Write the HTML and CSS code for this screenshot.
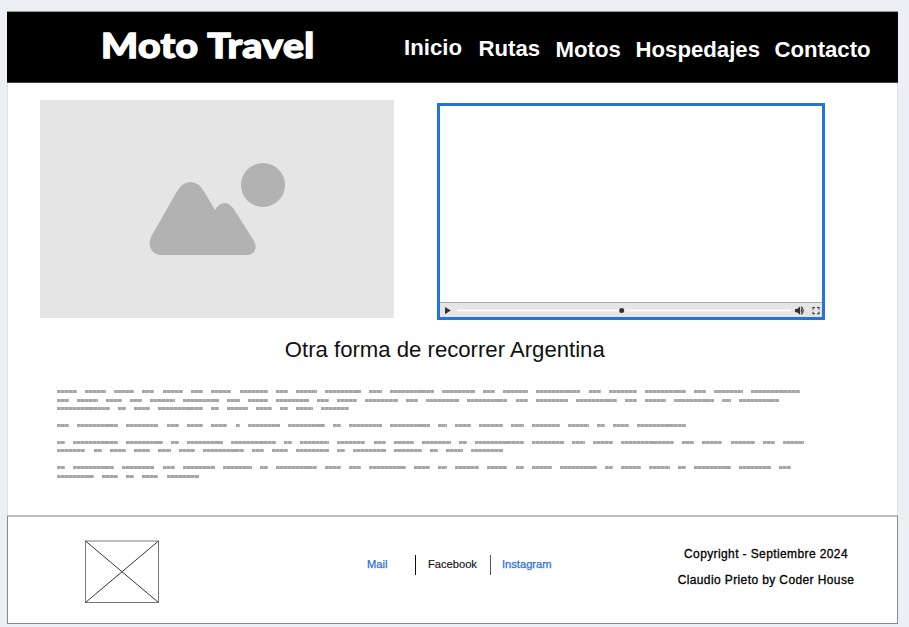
FILE: index.html
```html
<!DOCTYPE html>
<html lang="es">
<head>
<meta charset="utf-8">
<title>Moto Travel</title>
<link rel="stylesheet" href="styles.css">
</head>
<body>
<div class="page">
  <header class="header">
    <h1 class="brand">Moto Travel</h1>
    <nav class="nav">
      <a class="nav-home">Inicio</a>
      <a class="nav-routes">Rutas</a>
      <a>Motos</a>
      <a>Hospedajes</a>
      <a>Contacto</a>
    </nav>
  </header>
  <main class="main">
    <div class="media">
      <svg class="picture" viewBox="40 100 354 218">
        <circle cx="263" cy="185" r="22"/>
        <path d="M151.500 236 L176 193 Q182 182 190.500 182 Q199 182 205 193 L215 210 Q219 203 225 203 Q230 203 235 211 L254 241 Q257 246 254.500 251 Q252 255 247 255 H162 Q154 255 151 249 Q148 243 151.500 236 Z"/>
      </svg>
      <div class="video">
        <div class="screen"></div>
        <svg class="controls" viewBox="440 302 382 15">
          <path class="edge" d="M440 302.500H822"/>
          <path class="track" d="M457 310.500H791"/>
          <circle cx="621.700" cy="310.600" r="2.500"/>
          <path d="M445 307v7.200l5.800-3.600z"/>
          <path d="M795 309h2l3-2.600v8.400l-3-2.600h-2z"/>
          <path class="wave" d="M801 308.800q1.400 1.700 0 3.600M801 306.800q4.600 3.600 0 7.500"/>
          <path class="wave" d="M813 309.500v-2h2M817 307.500h2v2M819 311.700v2h-2M815 313.700h-2v-2"/>
        </svg>
      </div>
    </div>
    <h2 class="title">Otra forma de recorrer Argentina</h2>
    <div class="copy" id="copy"></div>
  </main>
  <footer class="footer">
    <svg class="logo" viewBox="0 0 75 63">
      <path class="frame-top" d="M0 1H74"/>
      <path class="frame" d="M.5 1V62.500H73.500V1"/>
      <path class="cross" d="M.5 1L73.500 62.500M73.500 1L.5 62.500"/>
    </svg>
    <div class="links">
      <a class="link mail">Mail</a>
      <span class="divider"></span>
      <span class="facebook">Facebook</span>
      <span class="divider soft"></span>
      <a class="link insta">Instagram</a>
    </div>
    <div class="credits">
      <p>Copyright - Septiembre 2024</p>
      <p class="author">Claudio Prieto by Coder House</p>
    </div>
  </footer>
</div>
<script src="copy.js"></script>
</body>
</html>
```
FILE: styles.css
```css
* { box-sizing: border-box; }
body {
  margin: 0;
  padding: 11px 11px 0 7px;
  height: 627px;
  overflow: hidden;
  background: #ecf0f5;
  font-family: "Liberation Sans", Arial, sans-serif;
  color: #111;
}
.page { width: 891px; background: #fff; }
.header {
  height: 72px;
  background: #000;
  border-top: 1px solid #999;
  border-bottom: 1px solid #444;
  display: flex;
  color: #fff;
}
.brand {
  width: 303px;
  margin: 0 0 0 94px;
  font: 900 34px/66px Lato, sans-serif;
  letter-spacing: 0.4px;
  white-space: nowrap;
  -webkit-text-stroke: 1.3px #fff;
  transform: scaleX(1.148);
  transform-origin: left center;
}
.nav {
  display: grid;
  grid-template-columns: 74.5px 77px 80px 139px 100px;
  font-size: 22.2px;
  font-weight: 700;
  line-height: 26px;
  padding-top: 25px;
}
.nav-home { margin-top: -2px; }
.nav-routes { margin-top: -1px; }
.main {
  height: 432px;
  border-left: 1px solid #dde2e8;
  border-right: 1px solid #dde2e8;
}
.media { display: flex; padding: 17px 0 0 32px; height: 237px; }
.picture { width: 354px; height: 218px; background: #e5e5e5; fill: #b2b2b2; }
.video {
  width: 388px;
  height: 217px;
  margin: 3px 0 0 43px;
  border: 3px solid #2474dc;
  display: flex;
  flex-direction: column;
}
.screen { flex: 1; }
.controls { width: 382px; height: 15px; background: #e5e5e5; fill: #333; display: block; }
.edge { stroke: #aaa; }
.track { stroke: #fff; stroke-width: 1.5; }
.wave { fill: none; stroke: #333; stroke-width: 1.1; }
.title {
  margin: 16px 0 0 276.8px;
  font-size: 22.15px;
  font-weight: 400;
  line-height: 28px;
  white-space: nowrap;
}
.copy { padding: 26.1px 0 0 49px; }
.row { display: flex; gap: 8.12px; height: 3px; margin-bottom: 5.45px; }
.row.last { margin-bottom: 14px; }
.word {
  background: repeating-linear-gradient(90deg, #a6a6a6 0 3.1px, #bcbcbc 3.1px 4.06px);
}
.footer {
  height: 109px;
  border: 1px solid #858a8d;
  border-top: 2px solid #bebebe;
  display: flex;
}
.logo { width: 75px; height: 63px; margin: 23px 0 0 77px; fill: none; }
.frame-top { stroke: #bbb; stroke-width: 2; }
.frame { stroke: #777; }
.cross { stroke: #333; }
.links {
  display: flex;
  height: 20px;
  margin: 38px 0 0 207px;
  font-size: 11.15px;
  line-height: 19px;
  white-space: nowrap;
}
.link { color: #2a6fdb; -webkit-text-stroke: 0.25px #2a6fdb; }
.mail { width: 48px; }
.divider { width: 1px; background: #111; }
.facebook { width: 74px; padding-left: 12px; -webkit-text-stroke: 0.15px #111; }
.divider.soft { background: #555; }
.insta { width: 62px; padding-left: 11px; }
.credits {
  width: 220px;
  margin: 29px 0 0 103px;
  text-align: center;
  font-size: 12px;
  line-height: 16px;
  letter-spacing: 0.39px;
  color: #000;
  -webkit-text-stroke: 0.3px #000;
}
.credits p { margin: 0 0 10px; }
```
FILE: copy.js
```js
// Word lengths, in characters, for each line of the placeholder copy.
const paragraphs = [
  [
    [5,5,5,3,5,3,5,7,3,5,9,3,11,8,3,6,11,3,7,10,3,7,12],
    [3,5,4,3,6,9,3,5,8,3,5,8,3,8,10,3,8,10,3,5,10,2,10],
    [13,2,4,11,2,5,4,2,4,7]
  ],
  [[3,10,8,3,4,4,1,8,9,2,8,10,2,4,6,3,7,5,2,4,12]],
  [
    [2,11,9,2,9,11,2,7,7,3,5,7,2,12,8,3,5,13,3,5,6,3,5],
    [7,2,4,4,3,4,10,3,4,8,2,8,7,2,4,8]
  ],
  [
    [2,10,8,3,8,7,2,10,4,3,9,4,2,6,5,2,5,9,2,5,5,2,9,8,3],
    [9,4,2,4,8]
  ]
];
const CHAR = 4.06;
const copy = document.getElementById("copy");
for (const lines of paragraphs) {
  lines.forEach((words, i) => {
    const row = document.createElement("div");
    row.className = i === lines.length - 1 ? "row last" : "row";
    for (const n of words) {
      const word = document.createElement("span");
      word.className = "word";
      word.style.width = n * CHAR + "px";
      row.append(word);
    }
    copy.append(row);
  });
}
```
